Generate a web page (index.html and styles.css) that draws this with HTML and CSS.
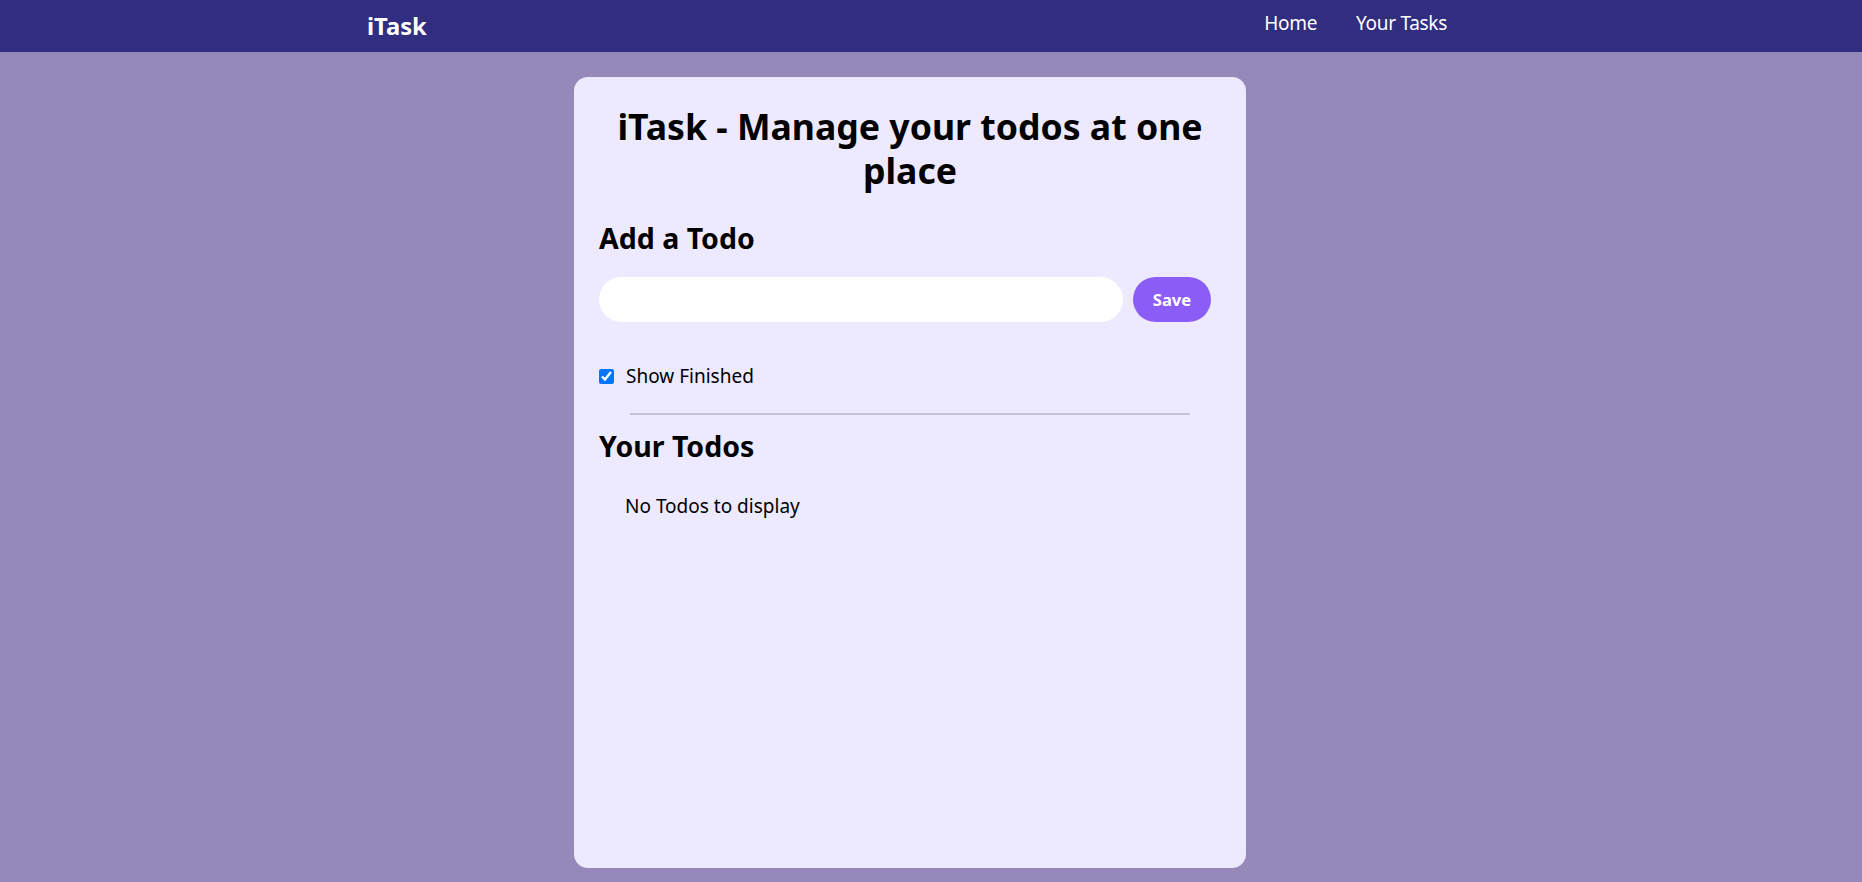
FILE: index.html
```html
<!DOCTYPE html>
<html lang="en">
<head>
<meta charset="utf-8">
<title>iTask</title>
<link rel="stylesheet" href="styles.css">
</head>
<body>
<nav class="navbar">
  <div class="navbar-inner">
    <span class="logo">iTask</span>
    <ul class="nav-links">
      <li>Home</li>
      <li>Your Tasks</li>
    </ul>
  </div>
</nav>
<main class="main">
  <section class="card">
    <h1 class="title">iTask - Manage your todos at one place</h1>
    <h2 class="section-title add-title">Add a Todo</h2>
    <div class="add-row">
      <input class="todo-input" type="text">
      <button class="save-btn">Save</button>
    </div>
    <label class="finished-row">
      <input class="finished-check" type="checkbox" checked>
      <span>Show Finished</span>
    </label>
    <div class="divider"></div>
    <h2 class="section-title todos-title">Your Todos</h2>
    <div class="todos">
      <div class="empty">No Todos to display</div>
    </div>
  </section>
</main>
</body>
</html>
```
FILE: styles.css
```css
* { box-sizing: border-box; }

html, body {
  margin: 0;
  padding: 0;
}

body {
  background: #9589ba;
  font-family: "Noto Sans", "Open Sans", sans-serif;
  color: #000;
  min-height: 882px;
}

.navbar {
  background: #312e81;
  height: 52px;
}

.navbar-inner {
  display: flex;
  justify-content: space-between;
  align-items: flex-start;
  padding: 10px 415px 0 367px;
}

.logo {
  color: #fff;
  font-weight: 700;
  font-size: 23.75px;
  line-height: 32px;
}

.nav-links {
  list-style: none;
  margin: 0;
  padding: 0;
  display: flex;
  gap: 39px;
  color: #fff;
  font-size: 19px;
  line-height: 26px;
  letter-spacing: -0.3px;
}

.main {
  display: flex;
  justify-content: center;
  padding-right: 42px;
  padding-top: 25px;
}

.card {
  width: 672px;
  height: 791px;
  background: #ede9fe;
  border-radius: 14px;
  padding: 28px 25px 0;
}

.title {
  margin: 0;
  text-align: center;
  font-size: 35.625px;
  line-height: 43.5px;
  font-weight: 700;
}

.section-title {
  margin: 0;
  font-size: 28.5px;
  line-height: 38px;
  font-weight: 700;
}

.add-title {
  margin-top: 27px;
}

.add-row {
  display: flex;
  gap: 10px;
  margin-top: 20px;
}

.todo-input {
  width: 524px;
  height: 45px;
  border: none;
  border-radius: 23px;
  background: #fff;
  padding: 0 18px;
  font: inherit;
  font-size: 19px;
  outline: none;
}

.save-btn {
  width: 78px;
  height: 45px;
  border: none;
  border-radius: 23px;
  background: #8b5cf6;
  color: #fff;
  font-family: inherit;
  font-weight: 700;
  font-size: 16.625px;
  padding: 0;
}

.finished-row {
  display: flex;
  align-items: center;
  gap: 12px;
  margin-top: 40px;
  font-size: 19px;
  line-height: 28.5px;
}

.finished-check {
  width: 15px;
  height: 15px;
  margin: 0;
  accent-color: #0075ff;
}

.divider {
  width: 560px;
  height: 2px;
  margin: 22px auto 0;
  background: #c6c2d8;
}

.todos-title {
  margin-top: 12px;
}

.todos {
  margin-top: 27px;
  padding-left: 26px;
}

.empty {
  font-size: 19px;
  line-height: 28.5px;
}
```
